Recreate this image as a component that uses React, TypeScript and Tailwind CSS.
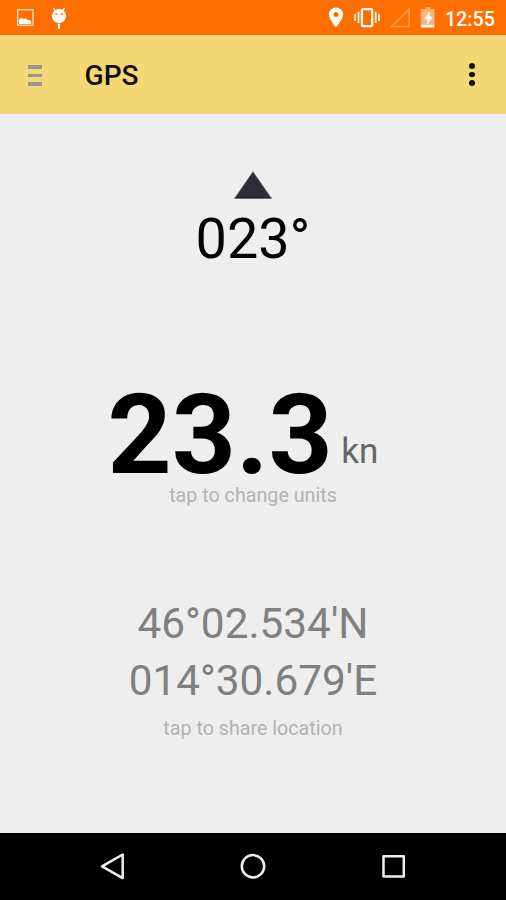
function StatusBar() {
  return (
    <div className="flex h-[35px] shrink-0 bg-[#ff6f00] text-white">
      <svg width="506" height="35" viewBox="0 0 506 35" fill="none">
        <rect x="17.6" y="9.7" width="15.4" height="15.6" stroke="#ffe2cc" strokeWidth="1.3" />
        <path d="M19 24v-4.500l2.500-2 2.200 1.700 1-.7 1.800.3 1 1.500 1.700-.5 2 1.500V24z" fill="#fff" />
        <circle cx="59" cy="16" r="7.1" fill="#fff" />
        <path d="M55.5 11.5l-2-3.6M62.500 11.500l2-3.600" stroke="#fff" strokeWidth="1.4" />
        <path d="M59 23.800v5.200" stroke="#fff" strokeWidth="2" />
        <path d="M55.200 13.900h2.300M60.700 13.900h2.300" stroke="#ff6f00" strokeWidth="1.5" />
        <path d="M336 7.500a7 7 0 0 0-7 7c0 5.200 7 12.700 7 12.700s7-7.500 7-12.700a7 7 0 0 0-7-7zm0 9.500a2.500 2.500 0 1 1 0-5 2.500 2.500 0 0 1 0 5z" fill="#fff" />
        <rect x="361.900" y="9.100" width="10.300" height="17" rx="1" stroke="#fff" strokeWidth="2.200" />
        <path d="M358.500 12v11M375.700 12v11" stroke="#fff" strokeWidth="1.700" />
        <path d="M355.100 14v7M379 14v7" stroke="#fff" strokeWidth="1.700" />
        <path d="M391.700 26.500L409 9.500v17z" stroke="#ff9f57" strokeWidth="1.700" />
        <path d="M425.500 7h5v2h4v15.700h-13.700V9h4.700z" fill="#ffb077" />
        <path d="M420.800 24.700h13.700V27.500h-13.700z" fill="#fff" />
        <path d="M429.500 12l-5 7h3.200v5l4.700-7h-3z" fill="#fff" stroke="#fff" strokeWidth=".6" />
        <text x="444.900" y="25.500" fontFamily="Roboto, sans-serif" fontSize="19.700" fontWeight="500" fill="#fff">12:55</text>
      </svg>
    </div>
  );
}

function Toolbar() {
  return (
    <header className="flex h-[79px] shrink-0 items-center bg-[#f5d876] pl-7 pr-[31px]">
      <div className="flex flex-col gap-[5.200px] pt-[2px]">
        <span className="h-[3.500px] w-[14px] bg-[#999590]" />
        <span className="h-[3.500px] w-[14px] bg-[#999590]" />
        <span className="h-[3.500px] w-[14px] bg-[#999590]" />
      </div>
      <h1 className="ml-[42.500px] grow pt-[3px] text-[28.100px] leading-[34px] font-medium text-[#131109]">GPS</h1>
      <div className="flex flex-col gap-[2.800px]">
        <span className="size-[5.700px] rounded-full bg-[#131109]" />
        <span className="size-[5.700px] rounded-full bg-[#131109]" />
        <span className="size-[5.700px] rounded-full bg-[#131109]" />
      </div>
    </header>
  );
}

function NavBar() {
  return (
    <nav className="flex h-[67px] shrink-0 bg-black">
      <svg width="506" height="67" viewBox="0 833 506 67" fill="none" stroke="#eee" strokeWidth="2.500" strokeLinejoin="round">
        <path d="M102 866.300L122.700 854.500v23.600z" />
        <circle cx="253" cy="866.300" r="11.200" />
        <rect x="383.500" y="856.200" width="20.300" height="20.300" />
      </svg>
    </nav>
  );
}

export default function App() {
  return (
    <div className="flex h-[900px] w-[506px] flex-col overflow-hidden bg-[#eee] font-['Roboto',sans-serif]">
      <StatusBar />
      <Toolbar />
      <main className="flex min-h-0 grow flex-col items-center pt-[57px]">
        <svg width="40" height="28" viewBox="0 0 40 28">
          <path d="M20 .5L38.500 27.300h-37z" fill="#2e2d38" stroke="#8e8e94" strokeWidth=".5" />
          <path d="M1.500 27h37" stroke="#15132a" strokeWidth=".8" />
        </svg>
        <div className="mt-[7px] text-[55.800px] leading-[66px] text-black">023°</div>
        <div className="mt-[113px] mr-[20px] flex h-[99px] items-end">
          <span className="text-[112px] leading-[99px] font-bold text-black">23.3</span>
          <span className="mb-[13px] ml-[8.500px] text-[35.100px] leading-[40px] text-[#666]">kn</span>
        </div>
        <div className="text-[19.700px] leading-[24px] text-[#b3b3b3]">tap to change units</div>
        <div className="mt-[87px] text-center text-[42.300px] leading-[57px] text-[#808080]">
          <div>46°02.534'N</div>
          <div>014°30.679'E</div>
        </div>
        <div className="mt-[8px] text-[19.700px] leading-[24px] text-[#b3b3b3]">tap to share location</div>
      </main>
      <NavBar />
    </div>
  );
}
